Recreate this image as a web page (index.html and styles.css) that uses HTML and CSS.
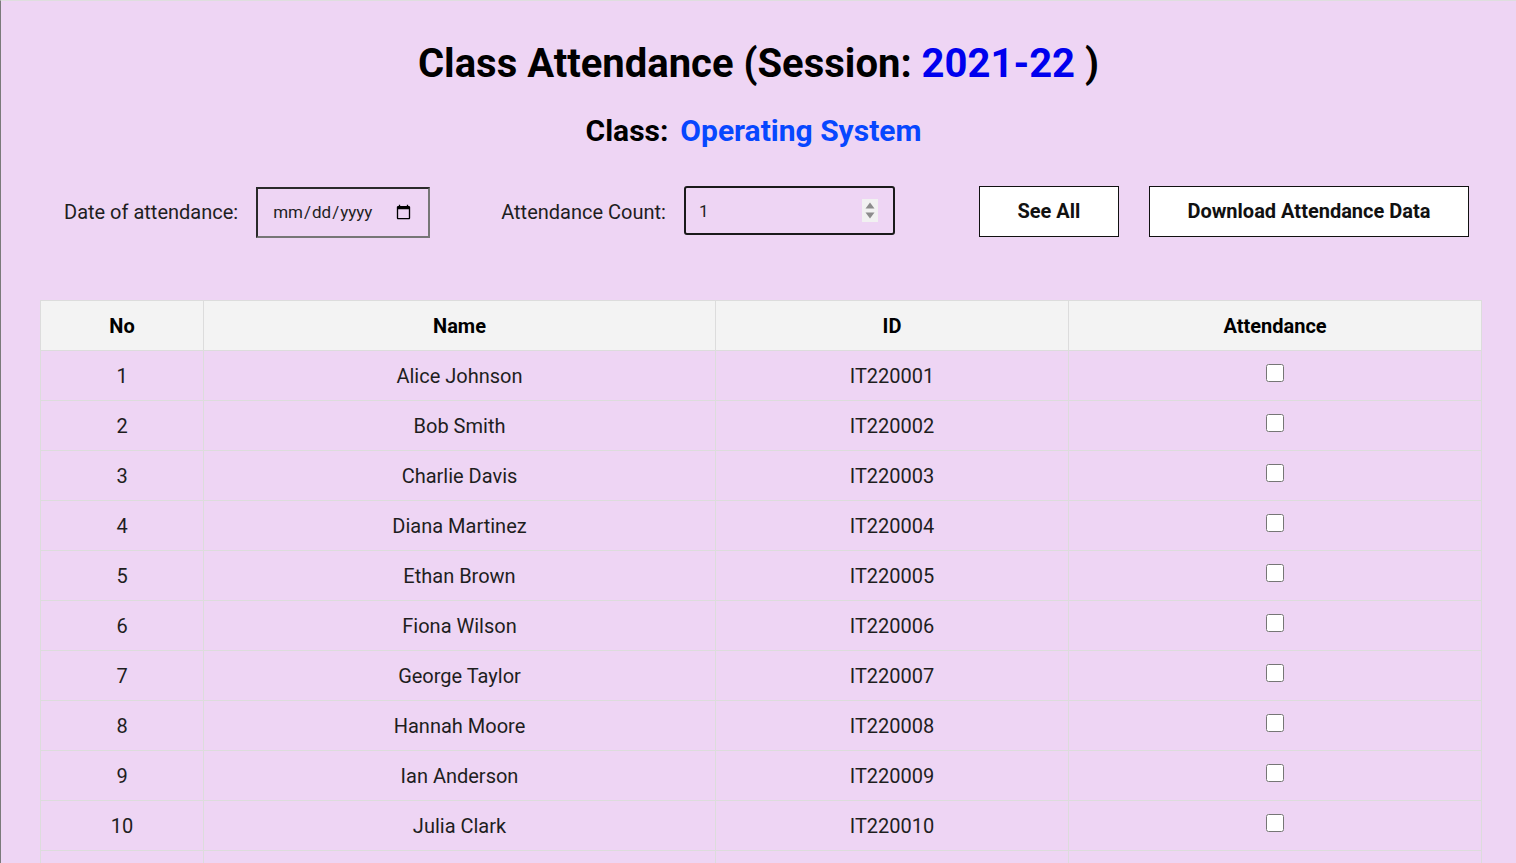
FILE: index.html
```html
<!DOCTYPE html>
<html lang="en">
<head>
<meta charset="utf-8">
<title>Class Attendance</title>
<link rel="stylesheet" href="styles.css">
</head>
<body>
<div class="page">
  <h1 class="title">Class Attendance (Session: <span class="session">2021-22</span> )</h1>
  <h2 class="subtitle">Class:&nbsp; <span class="classname">Operating System</span></h2>

  <div class="controls">
    <label class="lbl" for="date">Date of attendance:</label>
    <input class="date-input" id="date" type="date">
    <label class="lbl lbl-count" for="count">Attendance Count:</label>
    <span class="count-wrap">
      <input class="count-input" id="count" type="number" value="1">
      <svg class="spinner" width="16" height="23" viewBox="0 0 16 23" aria-hidden="true">
        <rect x="0" y="0" width="16" height="23" fill="#f1f1f1"/>
        <path d="M3.5 9.5 L8 3.5 L12.5 9.5 Z" fill="#8c8c8c"/>
        <path d="M3.5 13.5 L8 19.5 L12.5 13.5 Z" fill="#8c8c8c"/>
      </svg>
    </span>
    <button class="btn btn-see">See All</button>
    <button class="btn btn-download">Download Attendance Data</button>
  </div>

  <table class="att-table">
    <colgroup>
      <col class="c-no"><col class="c-name"><col class="c-id"><col class="c-att">
    </colgroup>
    <thead>
      <tr><th>No</th><th>Name</th><th>ID</th><th>Attendance</th></tr>
    </thead>
    <tbody>
      <tr><td>1</td><td>Alice Johnson</td><td>IT220001</td><td><input type="checkbox" class="chk"></td></tr>
      <tr><td>2</td><td>Bob Smith</td><td>IT220002</td><td><input type="checkbox" class="chk"></td></tr>
      <tr><td>3</td><td>Charlie Davis</td><td>IT220003</td><td><input type="checkbox" class="chk"></td></tr>
      <tr><td>4</td><td>Diana Martinez</td><td>IT220004</td><td><input type="checkbox" class="chk"></td></tr>
      <tr><td>5</td><td>Ethan Brown</td><td>IT220005</td><td><input type="checkbox" class="chk"></td></tr>
      <tr><td>6</td><td>Fiona Wilson</td><td>IT220006</td><td><input type="checkbox" class="chk"></td></tr>
      <tr><td>7</td><td>George Taylor</td><td>IT220007</td><td><input type="checkbox" class="chk"></td></tr>
      <tr><td>8</td><td>Hannah Moore</td><td>IT220008</td><td><input type="checkbox" class="chk"></td></tr>
      <tr><td>9</td><td>Ian Anderson</td><td>IT220009</td><td><input type="checkbox" class="chk"></td></tr>
      <tr><td>10</td><td>Julia Clark</td><td>IT220010</td><td><input type="checkbox" class="chk"></td></tr>
      <tr><td>11</td><td>Kevin Lewis</td><td>IT220011</td><td><input type="checkbox" class="chk"></td></tr>
    </tbody>
  </table>
</div>
</body>
</html>
```
FILE: styles.css
```css
html, body {
  margin: 0;
  padding: 0;
}
body {
  font-family: Roboto, "Liberation Sans", Arial, sans-serif;
  background: #eed5f4;
  color: #1e1e1e;
}
.page {
  border-left: 1px solid #7a7a7a;
  border-top: 1px solid #dedede;
  min-height: 100vh;
  box-sizing: border-box;
  overflow: hidden;
}
.title {
  margin: 39px 0 0;
  text-align: center;
  font-size: 40px;
  line-height: 47px;
  font-weight: 700;
  color: #000;
}
.session {
  color: #0000ee;
}
.subtitle {
  margin: 26px 0 0;
  padding-right: 10px;
  text-align: center;
  font-size: 30px;
  line-height: 35px;
  font-weight: 700;
  color: #000;
}
.classname {
  color: #0747ff;
  margin-left: -3px;
}
.controls {
  display: flex;
  align-items: center;
  margin-top: 38px;
  padding-left: 63px;
  height: 52px;
}
.lbl {
  font-size: 20px;
  color: #1e1e1e;
}
.date-input {
  margin-left: 18px;
  width: 174px;
  height: 51px;
  box-sizing: border-box;
  border: 2px solid #767676;
  border-top-color: #2a2a2a;
  border-left-color: #2a2a2a;
  background: transparent;
  font-family: Roboto, "Liberation Sans", Arial, sans-serif;
  font-size: 17px;
  padding: 0 14px;
  color: #1e1e1e;
}
.lbl-count {
  margin-left: 71px;
}
.count-wrap {
  position: relative;
  display: flex;
  margin-left: 18px;
  margin-top: -3px;
}
.count-input {
  width: 211px;
  height: 49px;
  box-sizing: border-box;
  border: 2px solid #1a1a1a;
  border-radius: 3px;
  background: transparent;
  font-family: Roboto, "Liberation Sans", Arial, sans-serif;
  font-size: 17px;
  padding: 0 12px 0 13px;
  color: #1e1e1e;
}
.count-input::-webkit-inner-spin-button,
.count-input::-webkit-outer-spin-button {
  -webkit-appearance: none;
  margin: 0;
}
.spinner {
  position: absolute;
  left: 178px;
  top: 13px;
}
.btn {
  height: 51px;
  box-sizing: border-box;
  background: #fff;
  border: 1px solid #111;
  border-radius: 0;
  font-family: Roboto, "Liberation Sans", Arial, sans-serif;
  font-size: 20px;
  font-weight: 700;
  color: #111;
  padding: 0;
  margin-top: -2px;
}
.btn-see {
  margin-left: 84px;
  width: 140px;
}
.btn-download {
  margin-left: 30px;
  width: 320px;
}
.att-table {
  margin: 62px 0 0 39px;
  width: 1441px;
  border-collapse: collapse;
  table-layout: fixed;
  font-size: 20px;
}
.c-no { width: 163px; }
.c-name { width: 512px; }
.c-id { width: 353px; }
.c-att { width: 413px; }
.att-table th,
.att-table td {
  border: 1px solid #dcdcdc;
  height: 49px;
  padding: 0;
  text-align: center;
  vertical-align: middle;
}
.att-table th {
  background: #f3f3f3;
  font-weight: 700;
  color: #000;
}
.att-table td {
  color: #1e1e1e;
}
.chk {
  width: 18px;
  height: 18px;
  margin: 0 0 6px;
  vertical-align: middle;
}
```
